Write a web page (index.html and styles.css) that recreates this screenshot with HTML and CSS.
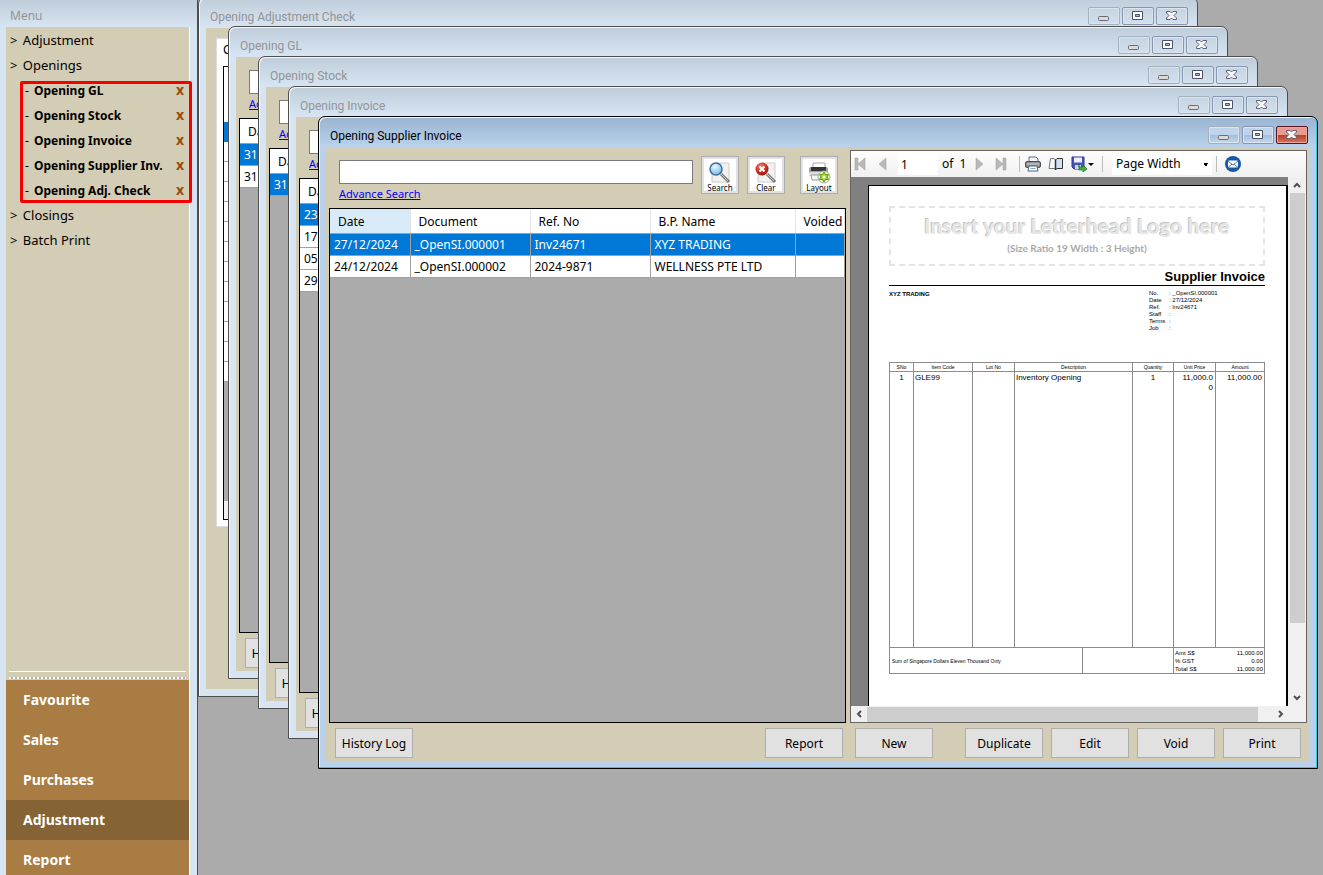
FILE: index.html
```html
<!DOCTYPE html>
<html lang="en">
<head>
<meta charset="utf-8">
<title>Opening Supplier Invoice</title>
<link rel="stylesheet" href="styles.css">
</head>
<body>
<svg class="defs" width="0" height="0" aria-hidden="true">
  <defs>
    <radialGradient id="glass" cx=".4" cy=".3" r=".8"><stop offset="0" stop-color="#eefaff"/><stop offset="1" stop-color="#62b4e2"/></radialGradient>
    <radialGradient id="ruby" cx=".4" cy=".3" r=".8"><stop offset="0" stop-color="#f0897b"/><stop offset=".6" stop-color="#c42418"/><stop offset="1" stop-color="#8e1008"/></radialGradient>
    <symbol id="min" viewBox="0 0 12 12"><rect x=".5" y="7.500" width="10" height="4" rx="1" fill="#dcd9d6" stroke="#6d6b70"/></symbol>
    <symbol id="max" viewBox="0 0 12 12"><path d="M.5 2.500h10v8H.5z" fill="#fff" stroke="#4c5068"/><path d="M3.500 5.500h4v2h-4z" fill="#a9bcd4" stroke="#4c5068"/></symbol>
    <symbol id="cls" viewBox="0 0 12 12"><path d="M.5 2.500h3.500l1.500 1.500L7 2.500h3.500v1.500L8 6.500l2.500 2.500v1.500H7L5.500 9 4 10.500H.5V9L3 6.500.5 4z" fill="#f8f8f8" stroke="#5c6078"/></symbol>
    <symbol id="up" viewBox="0 0 8 6"><path d="M1 5l3-3 3 3" fill="none" stroke="#505050" stroke-width="2"/></symbol>
  </defs>
</svg>
<div class="app">
  <aside class="menu">
    <h2 class="menu-title">Menu</h2>
    <div class="menu-body">
      <ul class="tree">
        <li><a href="#">&gt; <span>Adjustment</span></a></li>
        <li><a href="#">&gt; <span>Openings</span></a>
          <ul class="open-list">
            <li><a href="#">- <b>Opening GL</b></a><button aria-label="Close Opening GL">x</button></li>
            <li><a href="#">- <b>Opening Stock</b></a><button aria-label="Close Opening Stock">x</button></li>
            <li><a href="#">- <b>Opening Invoice</b></a><button aria-label="Close Opening Invoice">x</button></li>
            <li><a href="#">- <b>Opening Supplier Inv.</b></a><button aria-label="Close Opening Supplier Inv.">x</button></li>
            <li><a href="#">- <b>Opening Adj. Check</b></a><button aria-label="Close Opening Adj. Check">x</button></li>
          </ul>
        </li>
        <li><a href="#">&gt; <span>Closings</span></a></li>
        <li><a href="#">&gt; <span>Batch Print</span></a></li>
      </ul>
      <div class="gripper"></div>
      <nav class="modules">
        <a href="#">Favourite</a>
        <a href="#">Sales</a>
        <a href="#">Purchases</a>
        <a href="#" class="current">Adjustment</a>
        <a href="#">Report</a>
      </nav>
    </div>
  </aside>

  <main class="desktop">
    <section class="window w1">
      <header class="titlebar"><h2>Opening Adjustment Check</h2><div class="controls"><button aria-label="Minimize"><svg><use href="#min"/></svg></button><button aria-label="Maximize"><svg><use href="#max"/></svg></button><button aria-label="Close"><svg><use href="#cls"/></svg></button></div></header>
      <div class="body">
        <div class="tabpage"><p>C</p>
          <div class="lines"><div class="head"></div><div class="sel"></div><div class="stripes"></div><div class="void"></div><div class="total"></div></div>
        </div>
      </div>
    </section>

    <section class="window behind w2">
      <header class="titlebar"><h2>Opening GL</h2><div class="controls"><button aria-label="Minimize"><svg><use href="#min"/></svg></button><button aria-label="Maximize"><svg><use href="#max"/></svg></button><button aria-label="Close"><svg><use href="#cls"/></svg></button></div></header>
      <div class="body">
        <div class="panes"><div class="list">
          <div class="search"><div class="find"><input type="text" aria-label="Search Opening GL"><a href="#">Advance Search</a></div></div>
          <div class="grid"><table><tr><th>Date</th></tr><tr class="sel"><td>31</td></tr><tr><td>31</td></tr></table></div>
        </div></div>
        <footer class="actions"><button>History Log</button></footer>
      </div>
    </section>

    <section class="window behind w3">
      <header class="titlebar"><h2>Opening Stock</h2><div class="controls"><button aria-label="Minimize"><svg><use href="#min"/></svg></button><button aria-label="Maximize"><svg><use href="#max"/></svg></button><button aria-label="Close"><svg><use href="#cls"/></svg></button></div></header>
      <div class="body">
        <div class="panes"><div class="list">
          <div class="search"><div class="find"><input type="text" aria-label="Search Opening Stock"><a href="#">Advance Search</a></div></div>
          <div class="grid"><table><tr><th>Date</th></tr><tr class="sel"><td>31</td></tr></table></div>
        </div></div>
        <footer class="actions"><button>History Log</button></footer>
      </div>
    </section>

    <section class="window behind w4">
      <header class="titlebar"><h2>Opening Invoice</h2><div class="controls"><button aria-label="Minimize"><svg><use href="#min"/></svg></button><button aria-label="Maximize"><svg><use href="#max"/></svg></button><button aria-label="Close"><svg><use href="#cls"/></svg></button></div></header>
      <div class="body">
        <div class="panes"><div class="list">
          <div class="search"><div class="find"><input type="text" aria-label="Search Opening Invoice"><a href="#">Advance Search</a></div></div>
          <div class="grid"><table><tr><th>Date</th></tr><tr class="sel"><td>23</td></tr><tr><td>17</td></tr><tr><td>05</td></tr><tr><td>29</td></tr></table></div>
        </div></div>
        <footer class="actions"><button>History Log</button></footer>
      </div>
    </section>

    <section class="window w5 active">
      <header class="titlebar"><h2>Opening Supplier Invoice</h2><div class="controls"><button aria-label="Minimize"><svg><use href="#min"/></svg></button><button aria-label="Maximize"><svg><use href="#max"/></svg></button><button aria-label="Close" class="close"><svg><use href="#cls"/></svg></button></div></header>
      <div class="body">
        <div class="panes">
          <div class="list">
            <div class="search">
              <div class="find"><input type="text" aria-label="Search Opening Supplier Invoice"><a href="#">Advance Search</a></div>
              <button class="tool"><svg viewBox="0 0 24 22"><path d="M8 1h13v19H4V8" fill="#f1f1f1" stroke="#ccc"/><path d="M13 12l8 8" stroke="#777" stroke-width="3"/><path d="M13 12l7 7" stroke="#ccc"/><circle cx="8" cy="7" r="6" fill="url(#glass)" stroke="#3f6f9e" stroke-width="1.500"/></svg><span>Search</span></button>
              <button class="tool"><svg viewBox="0 0 24 22"><path d="M8 1h13v19H4V8" fill="#f1f1f1" stroke="#ccc"/><path d="M13 12l8 8" stroke="#777" stroke-width="3"/><path d="M13 12l7 7" stroke="#ccc"/><circle cx="8" cy="7" r="6.500" fill="url(#ruby)"/><path d="M5.500 4.500l5 5m0-5l-5 5" stroke="#fff" stroke-width="2"/></svg><span>Clear</span></button>
              <button class="tool last"><svg viewBox="0 0 24 22"><path d="M6 6V1h12v5" fill="#fff" stroke="#aaa"/><path d="M2 7q0-2 2-2h15q2 0 2 2v6H2z" fill="#a2a2a2"/><path d="M4 5h15v4H4z" fill="#333"/><path d="M2 10h19v4H2z" fill="#ddd"/><path d="M4 13h14l2 5H5z" fill="#f5f5f5" stroke="#999"/><circle cx="17" cy="15" r="6" fill="#e4f2c8" stroke="#a9b69a"/><path d="M17 10l1.500 2.500h3L20 15l1.500 2.500h-3L17 20l-1.500-2.500h-3L14 15l-1.500-2.500h3z" fill="#9bd22c" stroke="#68a017"/><circle cx="17" cy="15" r="1.500" fill="#fff"/></svg><span>Layout</span></button>
            </div>
            <div class="grid">
              <table>
                <colgroup><col class="c-date"><col class="c-doc"><col class="c-ref"><col class="c-name"><col class="c-void"></colgroup>
                <thead><tr><th class="sorted">Date</th><th>Document</th><th>Ref. No</th><th>B.P. Name</th><th>Voided</th></tr></thead>
                <tbody>
                  <tr class="sel"><td>27/12/2024</td><td>_OpenSI.000001</td><td>Inv24671</td><td>XYZ TRADING</td><td></td></tr>
                  <tr><td>24/12/2024</td><td>_OpenSI.000002</td><td>2024-9871</td><td>WELLNESS PTE LTD</td><td></td></tr>
                </tbody>
              </table>
            </div>
          </div>

          <div class="viewer">
            <div class="toolbar">
              <button class="nav" aria-label="First page"><svg viewBox="0 0 12 14"><path d="M1 1h3v12H1zM11 1v12L4 7z" fill="#b9b9b9" stroke="#999" stroke-width=".5"/></svg></button>
              <button class="nav" aria-label="Previous page"><svg viewBox="0 0 12 14"><path d="M10 1v12L3 7z" fill="#b9b9b9" stroke="#999" stroke-width=".5"/></svg></button>
              <input class="pageno" type="text" value="1" aria-label="Page number">
              <span class="of">of&nbsp; 1</span>
              <button class="nav" aria-label="Next page"><svg viewBox="0 0 12 14"><path d="M3 1v12l7-6z" fill="#b9b9b9" stroke="#999" stroke-width=".5"/></svg></button>
              <button class="nav" aria-label="Last page"><svg viewBox="0 0 12 14"><path d="M11 1H8v12h3zM1 1v12l7-6z" fill="#b9b9b9" stroke="#999" stroke-width=".5"/></svg></button>
              <i class="sep"></i>
              <button class="ic" aria-label="Print"><svg viewBox="0 0 16 16"><path d="M4 6V1h7l2 2v3" fill="#eef3fa" stroke="#667"/><rect x=".5" y="5.500" width="15" height="6" rx="1.500" fill="#8b8e93" stroke="#4e5157"/><path d="M2 8h12" stroke="#ddd"/><path d="M4 10h8l1 5H3z" fill="#fff" stroke="#55627a"/><path d="M5.500 12.500h5" stroke="#79a5df"/></svg></button>
              <button class="ic" aria-label="Print layout"><svg viewBox="0 0 16 16"><path d="M2.500 2.500H6l1.500 1.500v9.500L6 12.500H1z" fill="#f4f8fc" stroke="#777"/><path d="M14.500 2.500H9L7.500 4v9.500L9 12.500h5.500z" fill="#cfe2f5" stroke="#333"/><path d="M7.500 3.500v10.500" stroke="#333" stroke-width="1.500"/></svg></button>
              <button class="ic" aria-label="Export"><svg viewBox="0 0 16 16"><path d="M1 1h12v12H3l-2-2z" fill="#4b54b8" stroke="#30378a"/><path d="M3 1.500h8v5H3z" fill="#eef"/><path d="M4 9h6v4H4z" fill="#cfd3ee"/><path d="M8 8v3h4v-2l4 4-4 3v-2H8z" fill="#3cb53c" stroke="#167516" stroke-width=".7"/></svg></button>
              <i class="caret"></i>
              <i class="sep wide"></i>
              <select aria-label="Zoom"><option>Page Width</option></select>
              <i class="sep thin"></i>
              <button class="mail" aria-label="Email"><svg viewBox="0 0 16 16"><circle cx="8" cy="8" r="8" fill="#1a57a5"/><rect x="3" y="4.500" width="10" height="7" rx="1" fill="#fff"/><path d="M3 5l5 4 5-4M3 11.500l4-3.500m6 3.500L9 8" fill="none" stroke="#1a57a5" stroke-width=".8"/></svg></button>
            </div>
            <div class="stage">
              <div class="paper">
                <div class="letterhead"><strong>Insert your Letterhead Logo here</strong><span>(Size Ratio 19 Width : 3 Height)</span></div>
                <h1>Supplier Invoice</h1>
                <div class="parties">
                  <b>XYZ TRADING</b>
                  <dl><dt>No.</dt><dd>: _OpenSI.000001</dd><dt>Date</dt><dd>: 27/12/2024</dd><dt>Ref.</dt><dd>: Inv24671</dd><dt>Staff</dt><dd>:</dd><dt>Terms</dt><dd>:</dd><dt>Job</dt><dd>:</dd></dl>
                </div>
                <table class="items">
                  <colgroup><col class="i1"><col class="i2"><col class="i3"><col class="i4"><col class="i5"><col class="i6"><col class="i7"></colgroup>
                  <thead><tr><th>SNo</th><th>Item Code</th><th>Lot No</th><th>Description</th><th>Quantity</th><th>Unit Price</th><th>Amount</th></tr></thead>
                  <tbody><tr><td class="mid">1</td><td>GLE99</td><td></td><td>Inventory Opening</td><td class="mid">1</td><td class="num">11,000.0<br>0</td><td class="num">11,000.00</td></tr></tbody>
                </table>
                <div class="totals">
                  <p>Sum of Singapore Dollars Eleven Thousand Only</p>
                  <div class="blank"></div>
                  <dl><dt>Amt S$</dt><dd>11,000.00</dd><dt>% GST</dt><dd>0.00</dd><dt>Total S$</dt><dd>11,000.00</dd></dl>
                </div>
              </div>
              <div class="vscroll"><svg><use href="#up"/></svg><div class="thumb"></div><svg class="down"><use href="#up"/></svg></div>
            </div>
            <div class="hscroll"><svg class="left"><use href="#up"/></svg><div class="thumb"></div><svg class="right"><use href="#up"/></svg></div>
          </div>
        </div>
        <footer class="actions">
          <button>History Log</button>
          <button class="report">Report</button>
          <button class="new">New</button>
          <button class="dup">Duplicate</button>
          <button>Edit</button>
          <button>Void</button>
          <button>Print</button>
        </footer>
      </div>
    </section>
  </main>
</div>
</body>
</html>
```
FILE: styles.css
```css
* { box-sizing: border-box; }
body { margin: 0; font: 12px/16px "Noto Sans", "Open Sans", sans-serif; color: #000; background: #ababab; }
ul, dl, dd, p, h1, h2 { margin: 0; padding: 0; list-style: none; }
button, input, select { font: inherit; color: inherit; margin: 0; }
a { color: inherit; text-decoration: none; }
.defs { position: absolute; }
.app { display: flex; height: 100vh; overflow: hidden; }

/* Menu panel */
.menu { flex: 0 0 198px; display: flex; flex-direction: column; padding: 0 7px 0 6px; background: #d7e4f2 linear-gradient(#bfcddb, #d7e4f2 27px) no-repeat; border-right: 1px solid #4d4d4d; }
.menu-title { height: 27px; padding: 7px 4px 0; font-size: 12px; font-weight: 400; line-height: 18px; color: #949494; }
.menu-body { flex: 1; min-height: 0; display: flex; flex-direction: column; background: #d4cdb5; border-right: 1px solid #fff; }
.tree { flex: 1; padding-top: 1px; line-height: 25px; font-size: 13px; }
.tree > li { padding-left: 4px; }
.tree span, .tree b { margin-left: 2px; }
.open-list { position: relative; margin-left: 12px; padding-left: 3px; }
.open-list::after { content: ""; position: absolute; inset: 3px -3px 0 -2px; border: 3px solid #f40000; border-radius: 2px; pointer-events: none; }
.open-list li { display: flex; justify-content: space-between; font-size: 12px; }
.open-list a { white-space: nowrap; }
.open-list button { border: 0; padding: 0; width: 18px; height: 23px; background: none; color: #9c4a0c; font-size: 14px; font-weight: 700; line-height: 23px; }
.gripper { height: 9px; margin: 0 3px; border-top: 1px solid #fff; background: repeating-linear-gradient(90deg, #fff 0 2px, #b3b0a4 2px 4px) 0 5px / 100% 2px no-repeat; }
.modules { margin-bottom: -5px; background: #a87c43; }
.modules a { display: block; padding-left: 17px; line-height: 40px; font-size: 14px; font-weight: 700; color: #fff; }
.modules .current { background: #856335; }

/* Cascaded windows on the desktop */
.desktop { flex: 1; position: relative; overflow: hidden; background: #ababab; }
.window { position: absolute; display: flex; flex-direction: column; padding: 0 8px 7px 7px; background: #d7e4f2 linear-gradient(#bfcddb, #d7e4f2 29px); border: 1px solid #4d4d4d; border-radius: 7px 7px 0 0; box-shadow: inset 1px 1px #f3f7fb; }
.w1 { inset: -3px 125px 178px 0; }
.w2 { inset: 26px 95px 196px 30px; }
.w3 { inset: 56px 65px 166px 60px; }
.w4 { inset: 86px 35px 136px 90px; }
.w5 { inset: 116px 5px 106px 120px; }
.titlebar { flex: 0 0 30px; display: flex; justify-content: space-between; padding: 9px 1px 0 4px; }
.titlebar h2 { font-family: Roboto, "Noto Sans", sans-serif; font-size: 12px; font-weight: 400; line-height: 20px; color: #949494; }
.controls { display: flex; gap: 2px; }
.controls button { width: 32px; height: 18px; padding: 0; border: 1px solid #8796b1; border-radius: 2px; background: linear-gradient(#c6d3e1, #d2dfed); box-shadow: inset 0 0 0 1px #d9e4ef; }
.controls button:first-child { border-color: #a3b0bd; }
.controls svg { display: block; width: 12px; height: 12px; margin: 0 auto 2px; }
.active { background: #b9d1ea linear-gradient(#99b4d1, #b9d1ea 29px); border-color: #000; box-shadow: inset -1px -1px #35c5e8, inset 1px 1px #eef5fc; }
.active .titlebar h2 { color: #000; }
.active .controls button { background: linear-gradient(#bfd3ea 50%, #a3bdd9 50%, #c2d8ef); }
.active .controls .close { border-color: #5c1520; background: linear-gradient(#e79a90 50%, #bb3c24 50%, #d4775f); box-shadow: inset 0 0 0 1px #e9a59c; }
.body { flex: 1; min-height: 0; display: flex; flex-direction: column; background: #d4cdb5; }
.panes { flex: 1; min-height: 0; display: flex; gap: 4px; padding: 3px 2px 0 3px; }
.list { flex: 518 1 0; min-width: 0; display: flex; flex-direction: column; }
.search { flex: 0 0 58px; display: flex; align-items: flex-start; gap: 8px; padding: 6px 8px 0 10px; }
.find { flex: 1; padding-top: 4px; }
.find input { display: block; width: 100%; height: 24px; border: 1px solid #7a7a7a; background: #fff; }
.find a { display: inline-block; margin-top: 2px; font-size: 11px; color: #00f; text-decoration: underline; }
.behind .find a { width: 18px; overflow: hidden; white-space: nowrap; }
.tool { width: 38px; height: 38px; padding: 3px 2px 0; border: 1px solid #adadad; background: #fff; box-shadow: inset 0 0 0 2px #e1e1e1; font-size: 8px; line-height: 8px; text-align: center; }
.tool svg { display: block; width: 24px; height: 22px; margin: 0 auto; }
.tool span { display: block; }
.tool.last { margin-left: 7px; }

.grid { flex: 1; overflow: hidden; border: 1px solid #000; background: #ababab; }
.grid table { width: 100%; border-collapse: collapse; table-layout: fixed; background: #fff; }
.grid th { height: 24px; padding: 2px 0 0 8px; border-right: 1px solid #e5e5e5; border-bottom: 1px solid #a0a0a0; text-align: left; font-weight: 400; white-space: nowrap; }
.grid td { height: 22px; padding: 2px 0 0 4px; border-right: 1px solid #a0a0a0; border-bottom: 1px solid #a0a0a0; white-space: nowrap; }
.grid .sorted { background: #d9ebf9; }
.grid .sel { background: #0078d7; color: #fff; }
.c-date { width: 80px; }
.c-doc, .c-ref { width: 120px; }
.c-name { width: 145px; }

.actions { display: flex; gap: 8px; padding: 5px 8px 3px 9px; }
.actions button { width: 78px; height: 30px; padding: 2px 0 0; border: 1px solid #adadad; background: #e1e1e1; white-space: nowrap; }
.actions .report { margin-left: auto; }
.actions .new { margin-left: 4px; }
.actions .dup { margin-left: 24px; }

/* Adjustment check page */
.tabpage { display: flex; flex-direction: column; margin: 10px 10px 0; height: 489px; padding: 2px 6px 6px; background: #fff; border: 1px solid #dcdcdc; }
.tabpage p { flex: 0 0 25px; line-height: 18px; }
.lines { flex: 1; display: flex; flex-direction: column; border: 1px solid #000; background: #fff; }
.lines .head { height: 55px; }
.lines .sel { height: 20px; background: #0078d7; }
.lines .stripes { height: 240px; background: repeating-linear-gradient(#fff 0 19px, #a0a0a0 19px 20px); }
.lines .void { flex: 1; background: #ababab; }
.lines .total { height: 18px; background: #f0f0f0; }

/* Report viewer */
.viewer { flex: 456 1 0; min-width: 0; display: flex; flex-direction: column; border: 1px solid #646464; background: #f0f0f0; }
.toolbar { flex: 0 0 26px; display: flex; align-items: center; padding-left: 3px; background: linear-gradient(#fdfdfd, #f0f0f0); }
.toolbar > * { flex: none; }
.toolbar button { padding: 0; border: 0; background: none; }
.toolbar svg { display: block; width: 100%; height: 100%; }
.toolbar .nav { width: 12px; height: 14px; margin-right: 10px; }
.toolbar .pageno { width: 40px; height: 22px; margin-right: 4px; padding: 0 3px; border: 0; background: #fff; }
.of { width: 31px; white-space: nowrap; }
.toolbar .ic { width: 16px; height: 16px; margin-right: 7px; }
.sep { width: 1px; height: 16px; margin: 0 5px 0 2px; background: #bdbdbd; }
.sep.wide { margin: 0 9px 0 8px; }
.sep.thin { margin: 0 8px 0 4px; }
.caret { margin-left: -6px; border: 3px solid transparent; border-top-color: #000; border-bottom: 0; }
.toolbar select { width: 100px; height: 22px; padding: 0 4px; border: 0; appearance: none; background-color: #fff; background-image: linear-gradient(225deg, #000 50%, transparent 50%), linear-gradient(135deg, #000 50%, transparent 50%); background-repeat: no-repeat; background-size: 3px 3px; background-position: right 6px center, right 3px center; }
.toolbar .mail { width: 16px; height: 16px; }
.stage { flex: 1; min-height: 0; display: flex; background: #808080; }
.paper { flex: 1; min-width: 0; margin: 8px 0 0 17px; padding: 20px 21px 0 20px; overflow: hidden; border: solid #000; border-width: 1px 2px 0 1px; background: #fff; font-family: "Liberation Sans", Arial, sans-serif; font-size: 6px; line-height: 7px; }
.letterhead { height: 60px; display: flex; flex-direction: column; align-items: center; border: 2px dashed #e4e4e4; font-family: Lato, sans-serif; font-weight: 700; color: #a9a9a9; white-space: nowrap; }
.letterhead strong { margin-top: 6px; font-size: 21px; line-height: 24px; color: #e6e6e6; text-shadow: -1px -1px #c4c4c4; }
.letterhead span { margin-top: 3px; font-size: 10px; line-height: 14px; }
.paper h1 { padding-top: 2px; text-align: right; font-size: 13px; line-height: 17px; border-bottom: 1px solid #000; }
.parties { display: flex; justify-content: space-between; height: 76px; padding-top: 4px; }
.parties b { line-height: 8px; }
.parties dl { display: grid; grid-template-columns: 20px 96px; align-content: start; }
.items { width: 100%; border-collapse: collapse; table-layout: fixed; }
.items th, .items td { border: 1px solid #8c8c8c; padding: 0; vertical-align: top; }
.items th { height: 9px; font-size: 5px; line-height: 8px; font-weight: 400; }
.items td { height: 276px; padding: 1px 1px 0; font-size: 8px; line-height: 10px; }
.items .mid { text-align: center; }
.items .num { text-align: right; padding-right: 2px; }
.i1 { width: 24px; } .i2 { width: 59px; } .i3 { width: 42px; } .i5 { width: 41px; } .i6 { width: 42px; } .i7 { width: 49px; }
.totals { display: flex; height: 26px; border: 1px solid #8c8c8c; border-top: 0; }
.totals p { flex: 1; padding-left: 2px; line-height: 26px; font-size: 5px; }
.totals .blank { width: 92px; border: 1px solid #8c8c8c; border-width: 0 1px; }
.totals dl { width: 90px; display: grid; grid-template-columns: auto auto; align-content: center; line-height: 8px; padding: 0 1px; }
.totals dd { text-align: right; }
.vscroll { flex: 0 0 18px; display: flex; flex-direction: column; align-items: center; background: #f0f0f0; }
.vscroll svg, .hscroll svg { flex: none; width: 8px; height: 6px; margin: 5px; }
.vscroll .thumb { width: 15px; height: 430px; background: #cdcdcd; }
.vscroll .down { margin-top: auto; transform: rotate(180deg); }
.hscroll { flex: 0 0 16px; display: flex; align-items: center; padding-right: 17px; }
.hscroll svg { margin: 4px; }
.hscroll .thumb { flex: 1; height: 15px; margin-right: 15px; background: #cdcdcd; }
.hscroll .left { transform: rotate(-90deg); }
.hscroll .right { transform: rotate(90deg); }
```
